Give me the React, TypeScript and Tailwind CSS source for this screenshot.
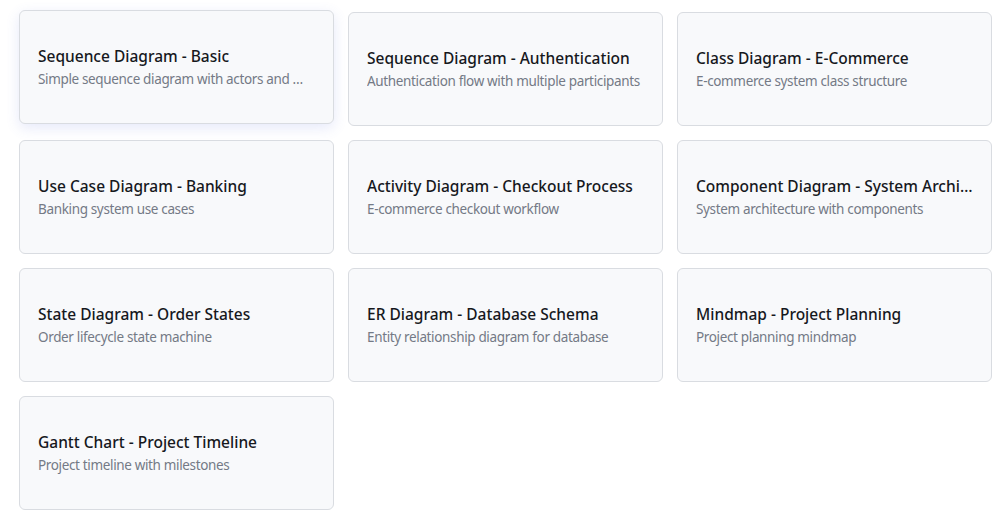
import React from 'react';

type Template = { title: string; description: string };

const templates: Template[] = [
  { title: 'Sequence Diagram - Basic', description: 'Simple sequence diagram with actors and messages' },
  { title: 'Sequence Diagram - Authentication', description: 'Authentication flow with multiple participants' },
  { title: 'Class Diagram - E-Commerce', description: 'E-commerce system class structure' },
  { title: 'Use Case Diagram - Banking', description: 'Banking system use cases' },
  { title: 'Activity Diagram - Checkout Process', description: 'E-commerce checkout workflow' },
  { title: 'Component Diagram - System Architecture', description: 'System architecture with components' },
  { title: 'State Diagram - Order States', description: 'Order lifecycle state machine' },
  { title: 'ER Diagram - Database Schema', description: 'Entity relationship diagram for database' },
  { title: 'Mindmap - Project Planning', description: 'Project planning mindmap' },
  { title: 'Gantt Chart - Project Timeline', description: 'Project timeline with milestones' },
];

const TemplateCard = ({ template, active }: { template: Template; active?: boolean }) => (
  <div
    className={`flex h-[114px] cursor-pointer flex-col justify-center rounded-[6px] border border-[#d9dce1] bg-[#f8f9fb] px-[18px] ${
      active ? '-translate-y-[2px] shadow-[0_4px_14px_rgba(79,98,220,0.14)]' : ''
    }`}
  >
    <div className="truncate text-[15.5px] font-medium leading-[22px] text-[#16181d]">{template.title}</div>
    <div className="mt-[2px] truncate text-[13.5px] leading-[20px] tracking-[-0.35px] text-[#747a86]">
      {template.description}
    </div>
  </div>
);

const App = () => {
  return (
    <div className="min-h-screen bg-white pl-[19px] pt-[12px] font-['Noto_Sans',sans-serif]">
      <div className="grid w-[973px] grid-cols-3 gap-[14px]">
        {templates.map((t, i) => (
          <TemplateCard key={t.title} template={t} active={i === 0} />
        ))}
      </div>
    </div>
  );
};

export default App;
